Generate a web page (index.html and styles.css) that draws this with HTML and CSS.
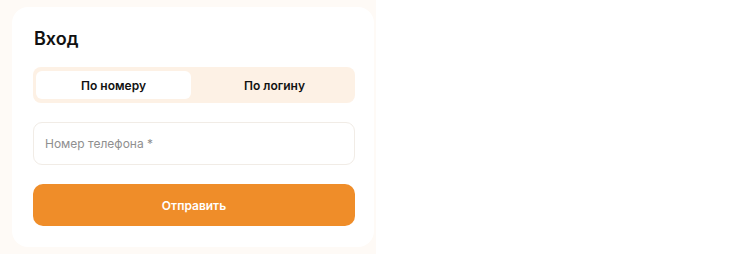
FILE: index.html
```html
<!DOCTYPE html>
<html lang="ru">
<head>
    <meta charset="UTF-8">
    <meta name="viewport" content="width=device-width, initial-scale=1.0">
    <title>Вход</title>
    <link rel="stylesheet" href="styles.css">
</head>
<body>
    <div class="frame">
        <div class="card">
            <h1 class="title">Вход</h1>

            <div class="tabs">
                <button class="tab active">По номеру</button>
                <button class="tab">По логину</button>
            </div>

            <input class="field" type="tel" placeholder="Номер телефона *">

            <button class="submit">Отправить</button>
        </div>
    </div>
</body>
</html>
```

FILE: styles.css
```css
body {
    margin: 0;
    background-color: #ffffff;
    font-family: Inter, "Noto Sans", sans-serif;
}

.frame {
    width: 362px;
    padding: 7px 2px 7px 12px;
    background-color: #fefaf6;
}

.card {
    display: flex;
    flex-direction: column;
    padding: 20px 19px 21px 21px;
    border-radius: 16px;
    background-color: #ffffff;
}

.title {
    margin: 0 0 16px 1px;
    font-size: 18px;
    line-height: 24px;
    font-weight: 600;
    color: #111111;
}

.tabs {
    display: flex;
    gap: 6px;
    height: 36px;
    padding: 4px 3px;
    box-sizing: border-box;
    border-radius: 8px;
    background-color: #fdf1e5;
}

.tab {
    flex: 1;
    border: none;
    border-radius: 6px;
    background: transparent;
    font-family: inherit;
    font-size: 12px;
    font-weight: 600;
    color: #111111;
}

.tab.active {
    background-color: #ffffff;
}

.field {
    height: 43px;
    margin-top: 19px;
    padding: 0 11px;
    box-sizing: border-box;
    border: 1px solid #f1ece6;
    border-radius: 9px;
    font-family: inherit;
    font-size: 12px;
    outline: none;
}

.field::placeholder {
    color: #8f8f8f;
}

.submit {
    height: 42px;
    margin-top: 19px;
    border: none;
    border-radius: 10px;
    background-color: #ef8d29;
    color: #ffffff;
    font-family: inherit;
    font-size: 12px;
    font-weight: 600;
}
```
